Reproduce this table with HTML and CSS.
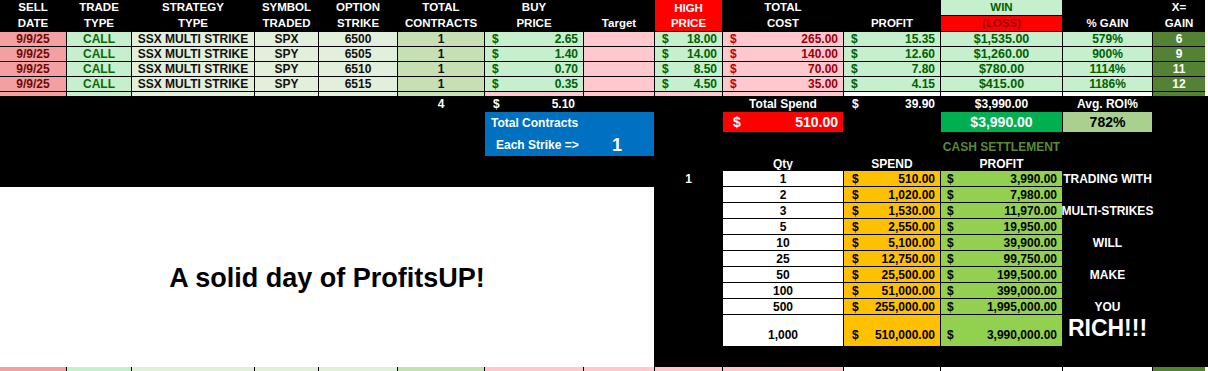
FILE: index.html
```html
<!DOCTYPE html>
<html lang="en">
<head>
<meta charset="utf-8">
<title>ProfitsUP trades</title>
<link rel="stylesheet" href="styles.css">
</head>
<body>
<div class="sheet">
  <div class="cell h">SELL</div>
  <div class="cell h">TRADE</div>
  <div class="cell h">STRATEGY</div>
  <div class="cell h">SYMBOL</div>
  <div class="cell h">OPTION</div>
  <div class="cell h">TOTAL</div>
  <div class="cell h">BUY</div>
  <div class="cell h"></div>
  <div class="cell h high"><span>HIGH</span><span>PRICE</span></div>
  <div class="cell h">TOTAL</div>
  <div class="cell h"></div>
  <div class="cell h win">WIN</div>
  <div class="cell h"></div>
  <div class="cell h">X=</div>

  <div class="cell h">DATE</div>
  <div class="cell h">TYPE</div>
  <div class="cell h">TYPE</div>
  <div class="cell h">TRADED</div>
  <div class="cell h">STRIKE</div>
  <div class="cell h">CONTRACTS</div>
  <div class="cell h">PRICE</div>
  <div class="cell h">Target</div>
  <div class="cell h">COST</div>
  <div class="cell h">PROFIT</div>
  <div class="cell h loss">(LOSS)</div>
  <div class="cell h">% GAIN</div>
  <div class="cell h">GAIN</div>

  <div class="cell date">9/9/25</div>
  <div class="cell call">CALL</div>
  <div class="cell lt">SSX MULTI STRIKE</div>
  <div class="cell lt">SPX</div>
  <div class="cell lt">6500</div>
  <div class="cell ct">1</div>
  <div class="cell gr acct"><span>$</span><span>2.65</span></div>
  <div class="cell pk"></div>
  <div class="cell gr acct"><span>$</span><span>18.00</span></div>
  <div class="cell pk acct red"><span>$</span><span>265.00</span></div>
  <div class="cell gr acct"><span>$</span><span>15.35</span></div>
  <div class="cell gr wv">$1,535.00</div>
  <div class="cell gr">579%</div>
  <div class="cell xg">6</div>

  <div class="cell date">9/9/25</div>
  <div class="cell call">CALL</div>
  <div class="cell lt">SSX MULTI STRIKE</div>
  <div class="cell lt">SPY</div>
  <div class="cell lt">6505</div>
  <div class="cell ct">1</div>
  <div class="cell gr acct"><span>$</span><span>1.40</span></div>
  <div class="cell pk"></div>
  <div class="cell gr acct"><span>$</span><span>14.00</span></div>
  <div class="cell pk acct red"><span>$</span><span>140.00</span></div>
  <div class="cell gr acct"><span>$</span><span>12.60</span></div>
  <div class="cell gr wv">$1,260.00</div>
  <div class="cell gr">900%</div>
  <div class="cell xg">9</div>

  <div class="cell date">9/9/25</div>
  <div class="cell call">CALL</div>
  <div class="cell lt">SSX MULTI STRIKE</div>
  <div class="cell lt">SPY</div>
  <div class="cell lt">6510</div>
  <div class="cell ct">1</div>
  <div class="cell gr acct"><span>$</span><span>0.70</span></div>
  <div class="cell pk"></div>
  <div class="cell gr acct"><span>$</span><span>8.50</span></div>
  <div class="cell pk acct red"><span>$</span><span>70.00</span></div>
  <div class="cell gr acct"><span>$</span><span>7.80</span></div>
  <div class="cell gr wv">$780.00</div>
  <div class="cell gr">1114%</div>
  <div class="cell xg">11</div>

  <div class="cell date">9/9/25</div>
  <div class="cell call">CALL</div>
  <div class="cell lt">SSX MULTI STRIKE</div>
  <div class="cell lt">SPY</div>
  <div class="cell lt">6515</div>
  <div class="cell ct">1</div>
  <div class="cell gr acct"><span>$</span><span>0.35</span></div>
  <div class="cell pk"></div>
  <div class="cell gr acct"><span>$</span><span>4.50</span></div>
  <div class="cell pk acct red"><span>$</span><span>35.00</span></div>
  <div class="cell gr acct"><span>$</span><span>4.15</span></div>
  <div class="cell gr wv">$415.00</div>
  <div class="cell gr">1186%</div>
  <div class="cell xg">12</div>

  <div class="cell date"></div>
  <div class="cell call"></div>
  <div class="cell lt"></div>
  <div class="cell lt"></div>
  <div class="cell lt"></div>
  <div class="cell ct"></div>
  <div class="cell pk"></div>
  <div class="cell pk"></div>
  <div class="cell pk"></div>
  <div class="cell pk"></div>
  <div class="cell wh"></div>
  <div class="cell wh"></div>
  <div class="cell wh"></div>
  <div class="cell xg"></div>
</div>

<div class="panel">
  <div class="cell t-contracts">4</div>
  <div class="cell acct t-buy"><span>$</span><span>5.10</span></div>
  <div class="cell t-spend">Total Spend</div>
  <div class="cell acct t-profit"><span>$</span><span>39.90</span></div>
  <div class="cell t-win">$3,990.00</div>
  <div class="cell t-roi">Avg. ROI%</div>

  <div class="blue">
    <div class="blue-top">Total Contracts</div>
    <div class="blue-bottom"><span class="each">Each Strike =&gt;</span><span class="each-num">1</span></div>
  </div>
  <div class="cell acct box-spend"><span>$</span><span>510.00</span></div>
  <div class="cell box-win">$3,990.00</div>
  <div class="cell box-roi">782%</div>

  <div class="cell cash-title">CASH SETTLEMENT</div>
  <div class="cell lbl-qty">Qty</div>
  <div class="cell lbl-spend">SPEND</div>
  <div class="cell lbl-profit">PROFIT</div>

  <div class="cell one">1</div>

  <div class="cash">
    <div class="cell q">1</div>
    <div class="cell acct sp"><span>$</span><span>510.00</span></div>
    <div class="cell acct pf"><span>$</span><span>3,990.00</span></div>
    <div class="cell msg">TRADING WITH</div>

    <div class="cell q">2</div>
    <div class="cell acct sp"><span>$</span><span>1,020.00</span></div>
    <div class="cell acct pf"><span>$</span><span>7,980.00</span></div>
    <div class="cell msg"></div>

    <div class="cell q">3</div>
    <div class="cell acct sp"><span>$</span><span>1,530.00</span></div>
    <div class="cell acct pf"><span>$</span><span>11,970.00</span></div>
    <div class="cell msg">MULTI-STRIKES</div>

    <div class="cell q">5</div>
    <div class="cell acct sp"><span>$</span><span>2,550.00</span></div>
    <div class="cell acct pf"><span>$</span><span>19,950.00</span></div>
    <div class="cell msg"></div>

    <div class="cell q">10</div>
    <div class="cell acct sp"><span>$</span><span>5,100.00</span></div>
    <div class="cell acct pf"><span>$</span><span>39,900.00</span></div>
    <div class="cell msg">WILL</div>

    <div class="cell q">25</div>
    <div class="cell acct sp"><span>$</span><span>12,750.00</span></div>
    <div class="cell acct pf"><span>$</span><span>99,750.00</span></div>
    <div class="cell msg"></div>

    <div class="cell q">50</div>
    <div class="cell acct sp"><span>$</span><span>25,500.00</span></div>
    <div class="cell acct pf"><span>$</span><span>199,500.00</span></div>
    <div class="cell msg">MAKE</div>

    <div class="cell q">100</div>
    <div class="cell acct sp"><span>$</span><span>51,000.00</span></div>
    <div class="cell acct pf"><span>$</span><span>399,000.00</span></div>
    <div class="cell msg"></div>

    <div class="cell q">500</div>
    <div class="cell acct sp"><span>$</span><span>255,000.00</span></div>
    <div class="cell acct pf"><span>$</span><span>1,995,000.00</span></div>
    <div class="cell msg">YOU</div>

    <div class="cell q last">1,000</div>
    <div class="cell acct sp last"><span>$</span><span>510,000.00</span></div>
    <div class="cell acct pf last"><span>$</span><span>3,990,000.00</span></div>
    <div class="cell msg rich">RICH!!!</div>
  </div>

  <div class="canvas">A solid day of ProfitsUP!</div>
</div>

<div class="sheet tail">
  <div class="cell date"></div>
  <div class="cell call"></div>
  <div class="cell lt"></div>
  <div class="cell lt"></div>
  <div class="cell lt"></div>
  <div class="cell ct"></div>
  <div class="cell pk"></div>
  <div class="cell pk"></div>
  <div class="cell pk"></div>
  <div class="cell pk"></div>
  <div class="cell wh"></div>
  <div class="cell wh"></div>
  <div class="cell wh"></div>
  <div class="cell xg"></div>
</div>
</body>
</html>
```

FILE: styles.css
```css
:root {
  --cols: 66px 64px 122px 63px 78px 86px 98px 70px 67px 120px 96px 121px 89px 52px;
}

html, body {
  margin: 0;
  padding: 0;
}

body {
  width: 1208px;
  height: 371px;
  overflow: hidden;
  background: #ffffff;
  font-family: "Liberation Sans", Arial, sans-serif;
  font-size: 12px;
  font-weight: bold;
  color: #000000;
}

.sheet {
  display: grid;
  grid-template-columns: var(--cols);
  grid-template-rows: 15px 15px repeat(4, 14px) 4px;
  gap: 1px;
  width: 1205px;
  background: #000000;
}

.cell {
  display: flex;
  align-items: center;
  justify-content: center;
  white-space: nowrap;
  overflow: hidden;
  line-height: 1;
  min-width: 0;
}

/* header */
.h {
  color: #ffffff;
  font-size: 11.5px;
}
.high {
  grid-row: span 2;
  flex-direction: column;
  background: #ff0000;
  line-height: 15px;
}
.win {
  background: #c6efce;
  color: #006100;
}
.loss {
  background: #ff0000;
  color: #9c0006;
}

/* data fills */
.date { background: #f5a0a0; color: #6b0a0a; }
.call { background: #c6efce; color: #0a6a0a; }
.lt { background: #e2efda; color: #111111; }
.ct { background: #c6e0b4; color: #111111; }
.gr { background: #c6efce; color: #006100; }
.pk { background: #ffc7ce; color: #9c0006; }
.wh { background: #ffffff; color: #006100; }
.xg { background: #548235; color: #ffffff; }
.red { color: #9c0006; }
.red span:first-child { color: #c00000; }
.wv { font-size: 12.5px; }

.acct {
  justify-content: space-between;
  padding: 0 5px 0 7px;
}

/* black panel */
.panel {
  display: grid;
  grid-template-columns: var(--cols);
  grid-template-rows: 15px 20px 23px 13px repeat(9, 15px) 31px 20px;
  gap: 1px;
  height: 271px;
  background: #000000;
  color: #ffffff;
}

.t-contracts { grid-column: 6; grid-row: 1; }
.t-buy { grid-column: 7; grid-row: 1; padding-right: 8px; padding-left: 8px; }
.t-spend { grid-column: 10; grid-row: 1; }
.t-profit { grid-column: 11; grid-row: 1; padding-left: 8px; }
.t-win { grid-column: 12; grid-row: 1; }
.t-roi { grid-column: 13; grid-row: 1; }

.blue {
  grid-column: 7 / 9;
  grid-row: 2 / 4;
  background: #0070c0;
  display: flex;
  flex-direction: column;
  white-space: nowrap;
}
.blue-top {
  height: 22px;
  display: flex;
  align-items: center;
  padding-left: 6px;
}
.blue-bottom {
  flex: 1;
  display: flex;
  align-items: center;
  padding-left: 11px;
}
.each {
  width: 116px;
}
.each-num {
  font-size: 18px;
}

.box-spend {
  grid-column: 10;
  grid-row: 2;
  background: #ff0000;
  font-size: 14px;
  padding: 0 5px 0 10px;
}
.box-win {
  grid-column: 12;
  grid-row: 2;
  background: #00b050;
  font-size: 14px;
}
.box-roi {
  grid-column: 13;
  grid-row: 2;
  background: #a9d08e;
  color: #000000;
  font-size: 14px;
}

.cash-title {
  grid-column: 12;
  grid-row: 3;
  align-items: flex-end;
  padding-bottom: 3px;
  color: #5a8a34;
  overflow: visible;
}
.lbl-qty { grid-column: 10; grid-row: 4; }
.lbl-spend { grid-column: 11; grid-row: 4; }
.lbl-profit { grid-column: 12; grid-row: 4; }

.one { grid-column: 9; grid-row: 5; }

.cash {
  grid-column: 10 / 14;
  grid-row: 5 / 15;
  display: grid;
  grid-template-columns: 120px 96px 121px 89px;
  grid-template-rows: repeat(9, 15px) 31px;
  gap: 1px;
}
.q { background: #ffffff; color: #000000; }
.sp { background: #ffc000; color: #000000; padding: 0 5px 0 8px; }
.pf { background: #92d050; color: #000000; padding: 0 5px 0 6px; }
.msg {
  color: #ffffff;
  overflow: visible;
  background: #000000;
}
.last {
  align-items: flex-end;
  padding-bottom: 5px;
}
.rich {
  font-size: 23px;
  padding-bottom: 4px;
}

.canvas {
  grid-column: 1 / 9;
  grid-row: 6 / 16;
  background: #ffffff;
  color: #000000;
  display: flex;
  align-items: center;
  justify-content: center;
  font-size: 27px;
  padding-top: 2px;
}

.tail {
  grid-template-rows: 15px;
}
```
